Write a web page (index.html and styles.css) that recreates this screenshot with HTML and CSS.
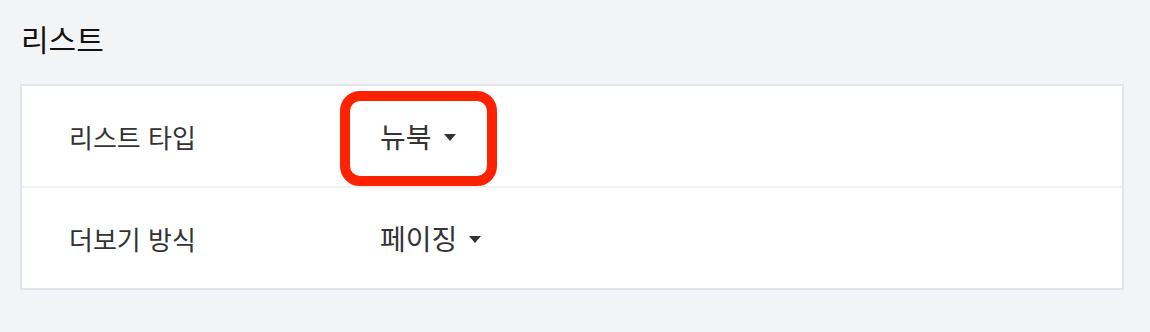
FILE: index.html
```html
<!DOCTYPE html>
<html lang="ko">
<head>
<meta charset="utf-8">
<link rel="stylesheet" href="styles.css">
</head>
<body>
<div class="page">
  <h2 class="title">리스트</h2>
  <div class="card">
    <div class="row">
      <div class="label">리스트 타입</div>
      <div class="value">
        <span class="select">뉴북<span class="caret"></span></span>
      </div>
      <span class="highlight"></span>
    </div>
    <div class="row">
      <div class="label">더보기 방식</div>
      <div class="value">
        <span class="select">페이징<span class="caret"></span></span>
      </div>
    </div>
  </div>
</div>
</body>
</html>
```

FILE: styles.css
```css
html, body {
  margin: 0;
  padding: 0;
  background: #f3f4f6;
}
body {
  font-family: "Noto Sans CJK KR", "Noto Sans", sans-serif;
  color: #333;
}
.page {
  padding: 16px 26px 0 20px;
}
.title {
  margin: 0 0 0 1px;
  font-size: 30px;
  line-height: 44px;
  font-weight: 400;
  color: #111;
  height: 68px;
}
.card {
  background: #fff;
  border: 2px solid #e1e4ec;
  width: 1100px;
}
.row {
  position: relative;
  display: flex;
  align-items: center;
  height: 100px;
  padding-left: 47px;
}
.row + .row {
  border-top: 2px solid #f0f1f5;
}
.label {
  width: 311px;
  font-size: 26px;
  color: #333;
}
.value {
  font-size: 28px;
  color: #333;
}
.select {
  display: flex;
  align-items: center;
  gap: 12px;
}
.caret {
  width: 0;
  height: 0;
  margin-top: 2px;
  border-left: 6.5px solid transparent;
  border-right: 6.5px solid transparent;
  border-top: 7px solid #333;
}
.highlight {
  position: absolute;
  left: 318px;
  top: 5px;
  width: 157px;
  height: 95px;
  box-sizing: border-box;
  border: 10px solid #ff2200;
  border-radius: 20px;
}
```
